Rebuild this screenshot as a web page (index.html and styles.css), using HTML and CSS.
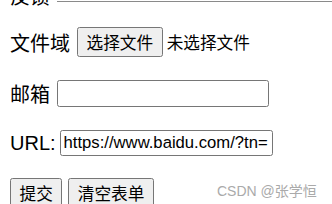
FILE: index.html
```html
<!DOCTYPE html>
<html>

	<head>
		<meta charset="UTF-8">
		<title>表单</title>
		<link rel="stylesheet" href="styles.css">
	</head>

	<body>
		<form class="feedback">
			<div class="box-head">
				<span class="box-title">反馈</span>
				<span class="box-line"></span>
			</div>

			<div class="row">
				<span class="label">文件域</span>
				<button type="button" class="btn">选择文件</button>
				<span class="file-name">未选择文件</span>
			</div>
			<div class="row row-mail">
				<span class="label">邮箱</span>
				<input class="field" type="text">
			</div>
			<div class="row row-url">
				<span class="label">URL:</span>
				<input class="field field-url" type="text" value="https://www.baidu.com/?tn=">
			</div>
			<div class="row">
				<button type="submit" class="btn">提交</button>
				<button type="reset" class="btn btn-reset">清空表单</button>
			</div>
		</form>
		<div class="watermark">CSDN @张学恒</div>
	</body>

</html>
```

FILE: styles.css
```css
* {
	margin: 0;
	padding: 0;
	box-sizing: border-box;
}

body {
	background: white;
	color: black;
	font-family: "Liberation Sans", "Noto Sans CJK SC", sans-serif;
	font-size: 20px;
	overflow: hidden;
}

.feedback {
	padding-left: 10px;
}

.box-head {
	display: flex;
	height: 7px;
	overflow: hidden;
}

.box-title {
	line-height: 20px;
	margin-top: -13px;
}

.box-line {
	flex: 1;
	margin-left: 7px;
	margin-top: 1px;
	border-top: 1px solid #8a8a8a;
	height: 1px;
}

.row {
	display: flex;
	align-items: center;
	height: 30px;
	margin-top: 20px;
}

.row-mail {
	margin-top: 21px;
}

.label {
	margin-right: 7px;
	white-space: nowrap;
}

.row-url .label {
	margin-right: 4px;
}

.btn {
	height: 30px;
	padding: 0 8.5px;
	font-family: "Liberation Sans", "Noto Sans CJK SC", sans-serif;
	font-size: 16.67px;
	color: black;
	background: #efefef;
	border: 1px solid #767676;
	border-radius: 2.5px;
}

.btn-reset {
	margin-left: 6px;
}

.file-name {
	margin-left: 4px;
	font-size: 16.67px;
}

.field {
	width: 212px;
	height: 27px;
	padding: 1px 3px;
	font-family: "Liberation Sans", "Noto Sans CJK SC", sans-serif;
	font-size: 16.67px;
	color: black;
	border: 1px solid #767676;
	border-radius: 2.5px;
}

.field-url {
	width: 213px;
	height: 26px;
}

.watermark {
	position: absolute;
	left: 217px;
	top: 180px;
	font-size: 14px;
	color: #aaa;
	white-space: nowrap;
}
```
